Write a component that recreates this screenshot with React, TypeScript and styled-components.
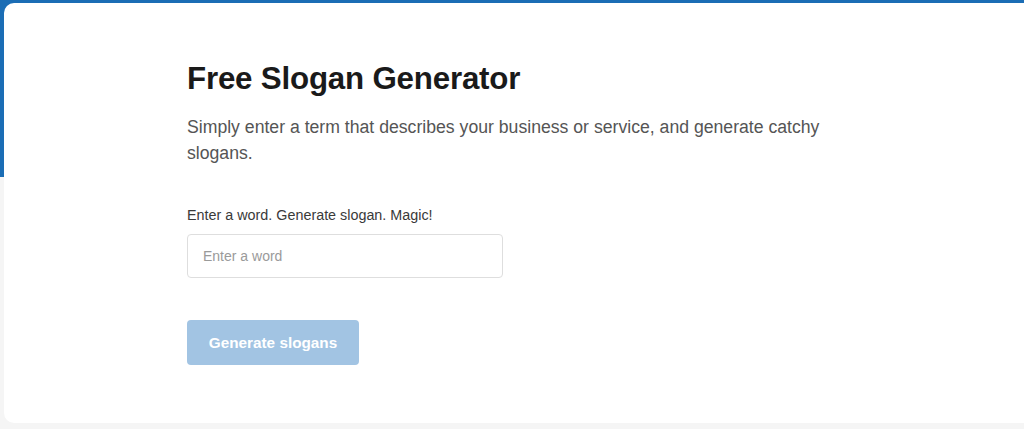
import React from "react";
import styled, { createGlobalStyle } from "styled-components";

const Global = createGlobalStyle`
  html, body { margin: 0; padding: 0; background: #f5f5f5; }
  body { font-family: "Liberation Sans", Arial, sans-serif; }
  * { box-sizing: border-box; }
`;

const Page = styled.div`
  position: relative;
  width: 1024px;
  height: 429px;
  overflow: hidden;
  background: #f5f5f5;
`;

const Band = styled.div`
  position: absolute;
  left: 0;
  top: 0;
  right: 0;
  height: 177px;
  background: #1b6db5;
`;

const Card = styled.main`
  position: relative;
  margin: 3px -20px 0 4px;
  height: 420px;
  background: #ffffff;
  border-radius: 10px;
  padding: 56px 0 0 183px;
  display: flex;
  flex-direction: column;
  align-items: flex-start;
`;

const Title = styled.h1`
  margin: 0;
  font-size: 31.3px;
  font-weight: 700;
  color: #1a1a1a;
  line-height: 40px;
  letter-spacing: -0.2px;
`;

const Lead = styled.p`
  margin: 15px 0 0;
  width: 660px;
  font-size: 17.65px;
  line-height: 26px;
  color: #555555;
`;

const Label = styled.label`
  margin-top: 40px;
  font-size: 14.35px;
  line-height: 18px;
  color: #3a3a3a;
`;

const Input = styled.input`
  margin-top: 10px;
  width: 316px;
  height: 44px;
  border: 1px solid #dedede;
  border-radius: 4px;
  padding: 0 15px;
  font-family: inherit;
  font-size: 14px;
  color: #333;
  outline: none;
  &::placeholder { color: #9a9a9a; }
`;

const Button = styled.button`
  margin-top: 42px;
  width: 172px;
  height: 45px;
  border: none;
  border-radius: 4px;
  background: #a2c4e3;
  color: #ffffff;
  font-family: inherit;
  font-size: 15.3px;
  font-weight: 700;
  cursor: not-allowed;
`;

export default function App() {
  return (
    <>
      <Global />
      <Page>
        <Band />
        <Card>
          <Title>Free Slogan Generator</Title>
          <Lead>
            Simply enter a term that describes your business or service, and generate catchy slogans.
          </Lead>
          <Label htmlFor="word">Enter a word. Generate slogan. Magic!</Label>
          <Input id="word" placeholder="Enter a word" />
          <Button disabled>Generate slogans</Button>
        </Card>
      </Page>
    </>
  );
}
